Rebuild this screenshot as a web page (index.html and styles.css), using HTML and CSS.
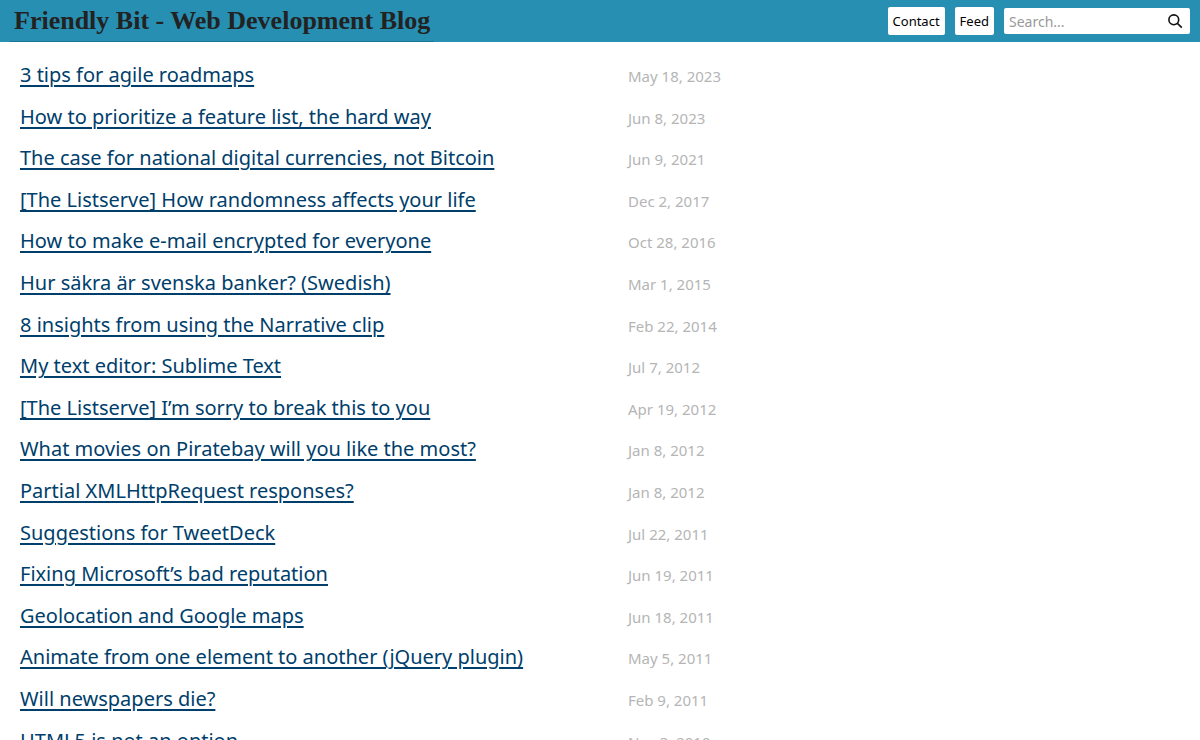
FILE: index.html
```html
<!DOCTYPE html>
<html lang="en">

<head>
  <meta charset="UTF-8">
  <meta name="viewport" content="width=device-width, initial-scale=1.0">
  <title>Friendly Bit - Web Development Blog</title>
  <link rel="stylesheet" href="styles.css">
</head>
<body>
  <header class="site-header">
    <h1 class="site-title"><a href="#">Friendly Bit - Web Development Blog</a></h1>
    <nav class="site-nav">
      <a href="#" class="nav-btn">Contact</a>
      <a href="#" class="nav-btn">Feed</a>
      <form class="search" role="search">
        <input type="search" name="q" aria-label="Search" placeholder="Search...">
        <button type="submit" aria-label="Search">
          <svg viewBox="0 0 16 16" width="16" height="16" fill="none" stroke="#111" stroke-width="1.6">
            <circle cx="6.8" cy="6.8" r="4.9"/>
            <path d="M10.4 10.4L14.8 14.6"/>
          </svg>
        </button>
      </form>
    </nav>
  </header>
  <main>
    <ul class="posts">
      <li><a href="#">3 tips for agile roadmaps</a> <time>May 18, 2023</time></li>
      <li><a href="#">How to prioritize a feature list, the hard way</a> <time>Jun 8, 2023</time></li>
      <li><a href="#">The case for national digital currencies, not Bitcoin</a> <time>Jun 9, 2021</time></li>
      <li><a href="#">[The Listserve] How randomness affects your life</a> <time>Dec 2, 2017</time></li>
      <li><a href="#">How to make e-mail encrypted for everyone</a> <time>Oct 28, 2016</time></li>
      <li><a href="#">Hur säkra är svenska banker? (Swedish)</a> <time>Mar 1, 2015</time></li>
      <li><a href="#">8 insights from using the Narrative clip</a> <time>Feb 22, 2014</time></li>
      <li><a href="#">My text editor: Sublime Text</a> <time>Jul 7, 2012</time></li>
      <li><a href="#">[The Listserve] I’m sorry to break this to you</a> <time>Apr 19, 2012</time></li>
      <li><a href="#">What movies on Piratebay will you like the most?</a> <time>Jan 8, 2012</time></li>
      <li><a href="#">Partial XMLHttpRequest responses?</a> <time>Jan 8, 2012</time></li>
      <li><a href="#">Suggestions for TweetDeck</a> <time>Jul 22, 2011</time></li>
      <li><a href="#">Fixing Microsoft’s bad reputation</a> <time>Jun 19, 2011</time></li>
      <li><a href="#">Geolocation and Google maps</a> <time>Jun 18, 2011</time></li>
      <li><a href="#">Animate from one element to another (jQuery plugin)</a> <time>May 5, 2011</time></li>
      <li><a href="#">Will newspapers die?</a> <time>Feb 9, 2011</time></li>
      <li><a href="#">HTML5 is not an option</a> <time>Nov 3, 2010</time></li>
    </ul>
  </main>
</body>

</html>
```

FILE: styles.css
```css
body {
  margin: 0;
  background-color: #fff;
  color: #222;
  font-family: "Trebuchet MS", "Noto Sans", sans-serif;
  font-size: 16px;
  line-height: 1.6em;
}

.site-header {
  display: flex;
  align-items: center;
  justify-content: space-between;
  height: 42px;
  padding: 0 10px;
  background-color: #278fb1;
}

.site-title {
  margin: 0;
  font-family: "Palatino Linotype", Palatino, "Liberation Serif", serif;
  font-size: 26px;
  line-height: 41px;
}

.site-title a {
  display: block;
  padding: 0 4px;
  border-bottom: 1px solid #1d7490;
  color: #222;
  text-decoration: none;
}

.site-nav {
  display: flex;
  align-items: center;
  gap: 10px;
}

.nav-btn {
  padding: 0 5px;
  border-radius: 2px;
  background-color: #fff;
  color: #000;
  font-size: 13px;
  line-height: 28px;
  text-decoration: none;
}

.search {
  display: flex;
  align-items: center;
  width: 186px;
  height: 26px;
  border-radius: 2px;
  background-color: #fff;
}

.search input {
  flex: 1;
  min-width: 0;
  padding: 0 5px;
  border: none;
  outline: none;
  background: none;
  font-family: inherit;
  font-size: 14px;
}

.search input::placeholder {
  color: #999;
}

.search button {
  display: flex;
  padding: 0 7px;
  border: none;
  background: none;
  cursor: pointer;
}

.posts {
  margin: 0;
  padding: 12px 20px;
  list-style: none;
}

.posts li {
  display: grid;
  grid-template-columns: minmax(0, 608px) 1fr;
  align-items: baseline;
  padding: 8px 0;
}

.posts a {
  color: #003e6b;
  font-size: 20px;
  text-decoration-thickness: 2px;
  text-underline-offset: 3px;
}

.posts time {
  color: #b5b5b5;
  font-size: 15px;
  line-height: 20px;
}
```
